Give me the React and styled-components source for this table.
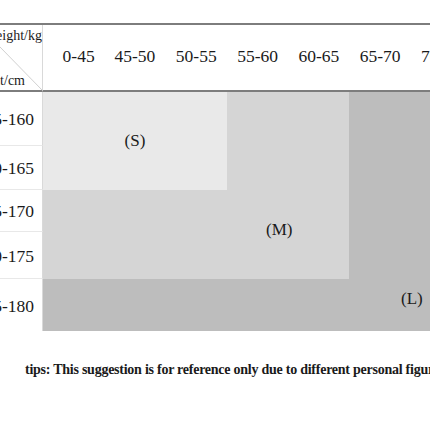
import React from 'react';
import styled, { createGlobalStyle } from 'styled-components';

const GlobalStyle = createGlobalStyle`
  html, body {
    margin: 0;
    background: #ffffff;
    overflow: hidden;
  }

  body {
    font-family: 'Liberation Serif', 'DejaVu Serif', serif;
    color: #1a1a1a;
  }
`;

const Page = styled.div`
  width: 430px;
  height: 430px;
  padding-top: 23px;
  box-sizing: border-box;
  overflow: hidden;
`;

const Chart = styled.div`
  display: grid;
  grid-template-columns: 43px repeat(7, 61.3px);
  grid-template-rows: 67px 54px 44px 42px 47px 52px;
  width: max-content;
  border-top: 2px solid #7d7d7d;
`;

const Corner = styled.div`
  position: relative;
  grid-column: 1;
  grid-row: 1;
  display: flex;
  flex-direction: column;
  justify-content: space-between;
  padding: 3px 0 1px 0;
  border-right: 1px solid #d9d9d9;
  border-bottom: 2px solid #7d7d7d;
  font-size: 14px;
  white-space: nowrap;

  svg {
    position: absolute;
    inset: 0;
    width: 100%;
    height: 100%;
    overflow: visible;
  }
`;

const AxisLabel = styled.span`
  display: flex;
  justify-content: flex-end;
  width: ${p => p.edge}px;
`;

const HeadCell = styled.div`
  grid-row: 1;
  display: flex;
  align-items: center;
  justify-content: center;
  padding-left: ${p => p.shift || 0}px;
  padding-bottom: 2px;
  border-bottom: 2px solid #7d7d7d;
  font-size: 17.5px;
  white-space: nowrap;
`;

const RowLabel = styled.div`
  grid-column: 1;
  grid-row: ${p => p.row};
  display: flex;
  align-items: center;
  justify-content: flex-end;
  padding: 2px 8px 0 0;
  border-right: 1px solid #d9d9d9;
  border-bottom: ${p => (p.last ? 'none' : '1px solid #e8e8e8')};
  font-size: 17.5px;
  white-space: nowrap;
`;

const Zone = styled.div`
  grid-column: ${p => p.cols};
  grid-row: ${p => p.rows};
  display: flex;
  align-items: center;
  justify-content: ${p => p.justify || 'center'};
  padding: ${p => p.pad || '0'};
  background: ${p => p.tone};
  font-size: 17px;
`;

const Tips = styled.p`
  margin: 31px 0 0 25px;
  font-size: 14px;
  font-weight: bold;
  white-space: nowrap;
  letter-spacing: -0.25px;
`;

const weights = ['0-45', '45-50', '50-55', '55-60', '60-65', '65-70', '70-75'];
const heights = ['155-160', '160-165', '165-170', '170-175', '175-180'];

const tones = {
  s: '#e9e9e9',
  m: '#d5d5d5',
  l: '#bdbdbd'
};

const App = () => (
  <Page>
    <GlobalStyle />
    <Chart>
      <Corner>
        <svg viewBox="0 0 43 67" preserveAspectRatio="none">
          <line x1="-22" y1="0" x2="43" y2="67" stroke="#cfcfcf" strokeWidth="1" />
        </svg>
        <AxisLabel edge={42}>Weight/kg</AxisLabel>
        <AxisLabel edge={25}>Height/cm</AxisLabel>
      </Corner>
      {weights.map((w, i) => (
        <HeadCell key={w} shift={i === 0 ? 10 : 0}>
          {w}
        </HeadCell>
      ))}
      {heights.map((h, i) => (
        <RowLabel key={h} row={i + 2} last={i === heights.length - 1}>
          {h}
        </RowLabel>
      ))}
      <Zone cols="2 / 5" rows="2 / 4" tone={tones.s}>
        (S)
      </Zone>
      <Zone cols="5 / 7" rows="2 / 4" tone={tones.m} />
      <Zone cols="2 / 7" rows="4 / 6" tone={tones.m} pad="0 0 10px 166px">
        (M)
      </Zone>
      <Zone cols="7 / 9" rows="2 / 6" tone={tones.l} />
      <Zone cols="2 / 9" rows="6 / 7" tone={tones.l} justify="flex-start" pad="0 0 12px 358px">
        (L)
      </Zone>
    </Chart>
    <Tips>tips: This suggestion is for reference only due to different personal figure.</Tips>
  </Page>
);

export default App;
